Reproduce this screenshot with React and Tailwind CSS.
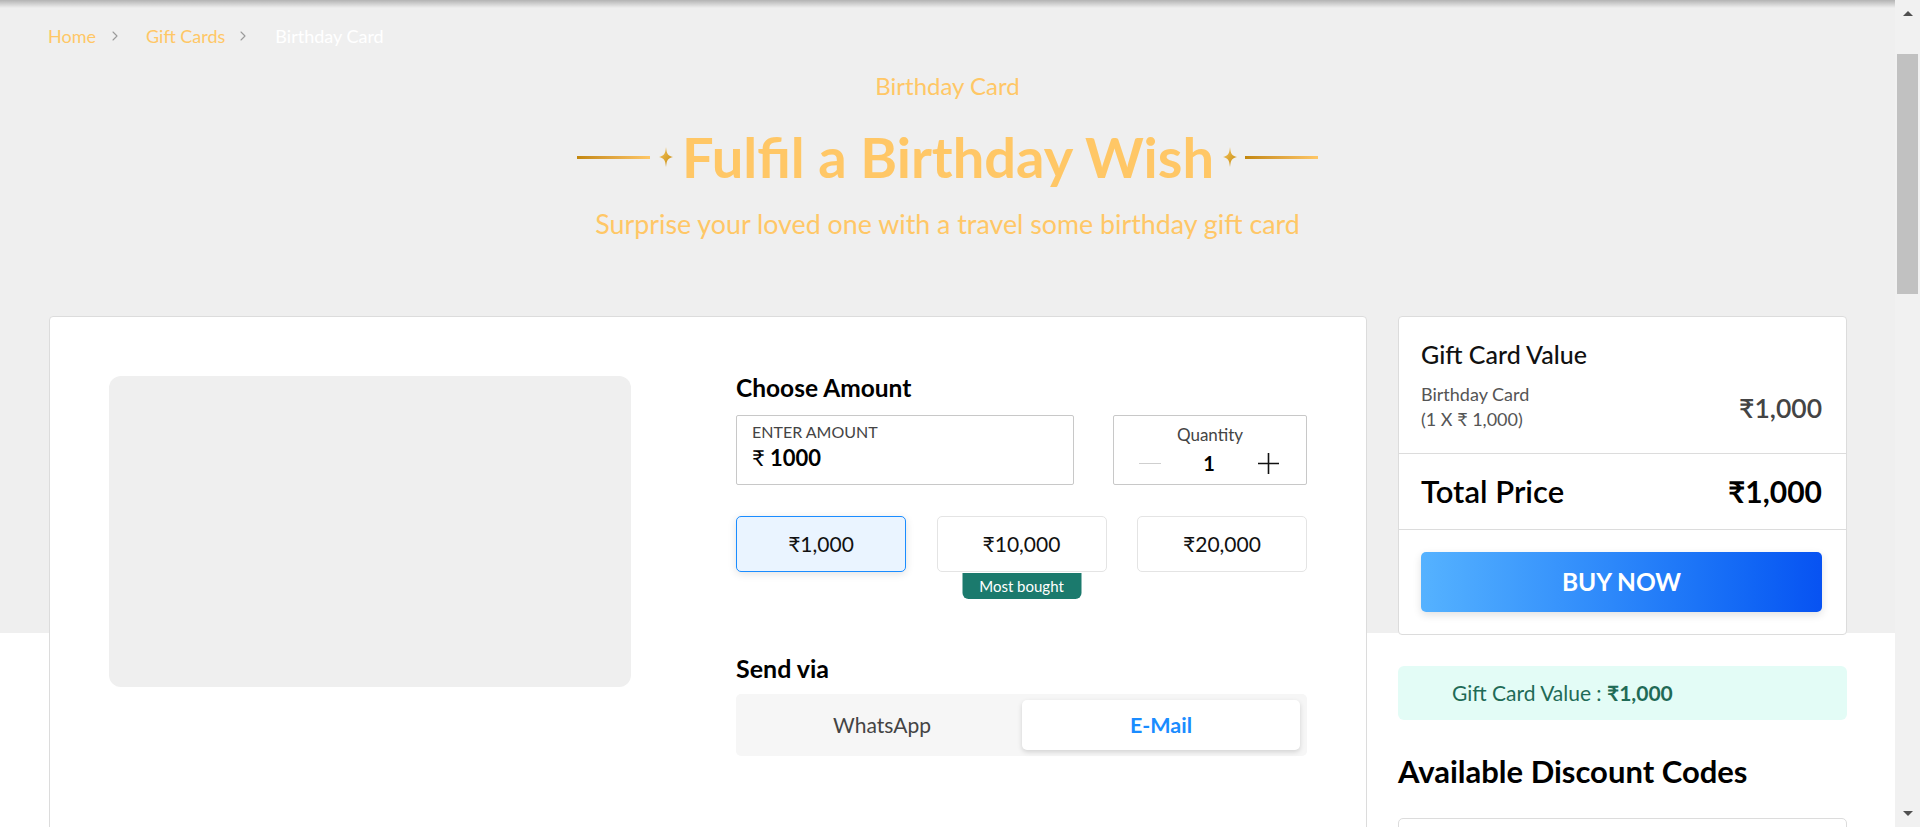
import { ChevronRight } from "lucide-react";

const gold = "text-[#ffc766]";

function Sparkle() {
  return (
    <svg width="14" height="20" viewBox="0 0 14 20" className="shrink-0">
      <defs>
        <linearGradient id="sp" x1="0" y1="0" x2="1" y2="1">
          <stop offset="0" stopColor="#f7c75e" />
          <stop offset="1" stopColor="#c3870b" />
        </linearGradient>
      </defs>
      <path d="M7 0 C7.7 6.5 8.6 8.8 14 10 C8.6 11.2 7.7 13.5 7 20 C6.3 13.5 5.4 11.2 0 10 C5.4 8.8 6.3 6.5 7 0Z" fill="url(#sp)" />
    </svg>
  );
}

function Line() {
  return <div className="h-[3px] w-[73px] bg-gradient-to-r from-[#c3870b] to-[#ffc766]" />;
}

function AmountBtn({ label, active, badge }) {
  return (
    <div className="relative w-[170px]">
      <div
        className={
          "flex h-[56px] items-center justify-center rounded-[5px] border text-[21px] text-[#111] " +
          (active
            ? "border-[#1a8cff] bg-[#eaf4ff] shadow-[0_2px_8px_rgba(0,0,0,0.12)]"
            : "border-[#e4e4e4] bg-white")
        }
      >
        {label}
      </div>
      {badge && (
        <div className="absolute left-1/2 top-[57px] flex h-[26px] w-[119px] -translate-x-1/2 items-center justify-center rounded-b-[6px] bg-[#1b7a6d] text-[15px] text-white">
          {badge}
        </div>
      )}
    </div>
  );
}

function Scrollbar() {
  return (
    <div className="fixed right-0 top-0 flex h-[827px] w-[25px] flex-col items-center bg-[#f1f1f1]">
      <div className="mt-[11px] h-0 w-0 border-x-[5px] border-b-[5px] border-x-transparent border-b-[#505050]" />
      <div className="mt-[38px] h-[240px] w-[21px] bg-[#c1c1c1]" />
      <div className="flex-1" />
      <div className="mb-[11px] h-0 w-0 border-x-[5px] border-t-[5px] border-x-transparent border-t-[#505050]" />
    </div>
  );
}

export default function App() {
  return (
    <div className="flex font-['Lato',sans-serif]">
      <div className="min-h-[1400px] w-[1895px] shrink-0 bg-[linear-gradient(#efefef_633px,#ffffff_633px)]">
        <div className="h-[8px] bg-gradient-to-b from-black/25 to-transparent" />

        {/* breadcrumb */}
        <div className="flex items-center px-[48px] pt-[17px] text-[18px] leading-[22px]">
          <span className={gold}>Home</span>
          <ChevronRight className="ml-[11px] mr-[23px] h-[16px] w-[16px] text-[#9a9a9a]" strokeWidth={1.6} />
          <span className={gold}>Gift Cards</span>
          <ChevronRight className="ml-[10px] mr-[24px] h-[16px] w-[16px] text-[#9a9a9a]" strokeWidth={1.6} />
          <span className="text-white">Birthday Card</span>
        </div>

        {/* hero */}
        <div className="flex flex-col items-center">
          <p className={"mt-[25px] text-[24px] leading-[28px] " + gold}>Birthday Card</p>
          <div className="mt-[25px] flex items-center">
            <Line />
            <div className="ml-[9px]"><Sparkle /></div>
            <h1 className={"mx-[9px] text-[56px] font-bold leading-[64px] " + gold}>
              Fulfil a Birthday Wish
            </h1>
            <Sparkle />
            <div className="ml-[8px]"><Line /></div>
          </div>
          <p className={"mt-[19px] text-[26.8px] leading-[32px] " + gold}>
            Surprise your loved one with a travel some birthday gift card
          </p>
        </div>

        {/* content */}
        <div className="mt-[76px] flex gap-[31px] pl-[49px] pr-[48px]">
          <div className="h-[700px] flex-1 rounded-[4px] border border-[#dcdcdc] bg-white px-[59px] pt-[59px]">
            <div className="flex gap-[105px]">
              <div className="h-[311px] w-[522px] rounded-[12px] bg-[#efefef]" />
              <div className="-mt-[2px] w-[571px]">
                <h2 className="text-[24.5px] font-bold leading-[28px] text-black">Choose Amount</h2>
                <div className="mt-[13px] flex justify-between">
                  <div className="h-[70px] w-[338px] rounded-[2px] border border-[#c8c8c8] px-[15px] pt-[6px]">
                    <p className="text-[16px] leading-[20px] text-[#444]">ENTER AMOUNT</p>
                    <p className="mt-[3px] text-[22px] font-bold leading-[26px] text-black">
                      <span className="font-normal">₹</span> 1000
                    </p>
                  </div>
                  <div className="flex h-[70px] w-[194px] flex-col items-center rounded-[2px] border border-[#c8c8c8] pt-[9px]">
                    <p className="text-[17px] leading-[20px] text-[#444]">Quantity</p>
                    <div className="mt-[6px] flex w-full items-center justify-between pl-[25px] pr-[26px]">
                      <span className="h-px w-[22px] bg-[#cfcfcf]" />
                      <span className="text-[20px] font-bold leading-[24px] text-black">1</span>
                      <svg width="23" height="23" viewBox="0 0 23 23">
                        <path d="M11.5 1V22M1 11.5H22" stroke="#111" strokeWidth="1.6" />
                      </svg>
                    </div>
                  </div>
                </div>

                <div className="mt-[31px] flex justify-between">
                  <AmountBtn label="₹1,000" active />
                  <AmountBtn label="₹10,000" badge="Most bought" />
                  <AmountBtn label="₹20,000" />
                </div>

                <h2 className="mt-[82px] text-[25px] font-bold leading-[28px] text-black">Send via</h2>
                <div className="mt-[12px] flex h-[62px] rounded-[5px] bg-[#f6f6f6] p-[6px] pr-[7px]">
                  <div className="flex flex-1 items-center justify-center text-[21px] text-[#444]">WhatsApp</div>
                  <div className="flex w-[278px] items-center justify-center rounded-[5px] bg-white text-[21.5px] font-bold text-[#1a8cff] shadow-[0_2px_5px_rgba(0,0,0,0.15)]">
                    E-Mail
                  </div>
                </div>
              </div>
            </div>
          </div>

          {/* sidebar */}
          <div className="w-[449px] shrink-0">
            <div className="rounded-[4px] border border-[#dcdcdc] bg-white">
              <div className="flex items-end justify-between border-b border-[#dcdcdc] pb-[23px] pl-[22px] pr-[24px] pt-[22px]">
                <div>
                  <p className="text-[25px] font-medium leading-[30px] text-[#111]">Gift Card Value</p>
                  <p className="mt-[14px] text-[18px] leading-[22px] text-[#555]">Birthday Card</p>
                  <p className="mt-[3px] text-[18px] leading-[22px] text-[#555]">(1 X ₹ 1,000)</p>
                </div>
                <p className="mb-[6px] text-[26.5px] font-semibold leading-[32px] text-[#444]">₹1,000</p>
              </div>
              <div className="flex h-[76px] items-center justify-between border-b border-[#dcdcdc] pl-[22px] pr-[24px]">
                <p className="text-[31px] font-semibold text-black">Total Price</p>
                <p className="text-[30px] font-bold text-black">₹1,000</p>
              </div>
              <div className="pb-[22px] pl-[22px] pr-[24px] pt-[22px]">
                <div className="flex h-[60px] items-center justify-center rounded-[5px] bg-gradient-to-r from-[#55b2ff] to-[#0852f2] text-[24.5px] font-bold text-white shadow-[0_3px_8px_rgba(0,0,0,0.12)]">
                  BUY NOW
                </div>
              </div>
            </div>

            <div className="mt-[31px] flex h-[54px] items-center rounded-[6px] bg-[#e3fcf6] pl-[54px] text-[21px] text-[#1f6b56]">
              Gift Card Value :&nbsp;<span className="font-bold">₹1,000</span>
            </div>

            <h2 className="mt-[33px] text-[31px] font-bold leading-[36px] text-black">Available Discount Codes</h2>
            <div className="mt-[29px] h-[120px] rounded-[5px] border border-[#dcdcdc] bg-white" />
          </div>
        </div>
      </div>
      <Scrollbar />
    </div>
  );
}
